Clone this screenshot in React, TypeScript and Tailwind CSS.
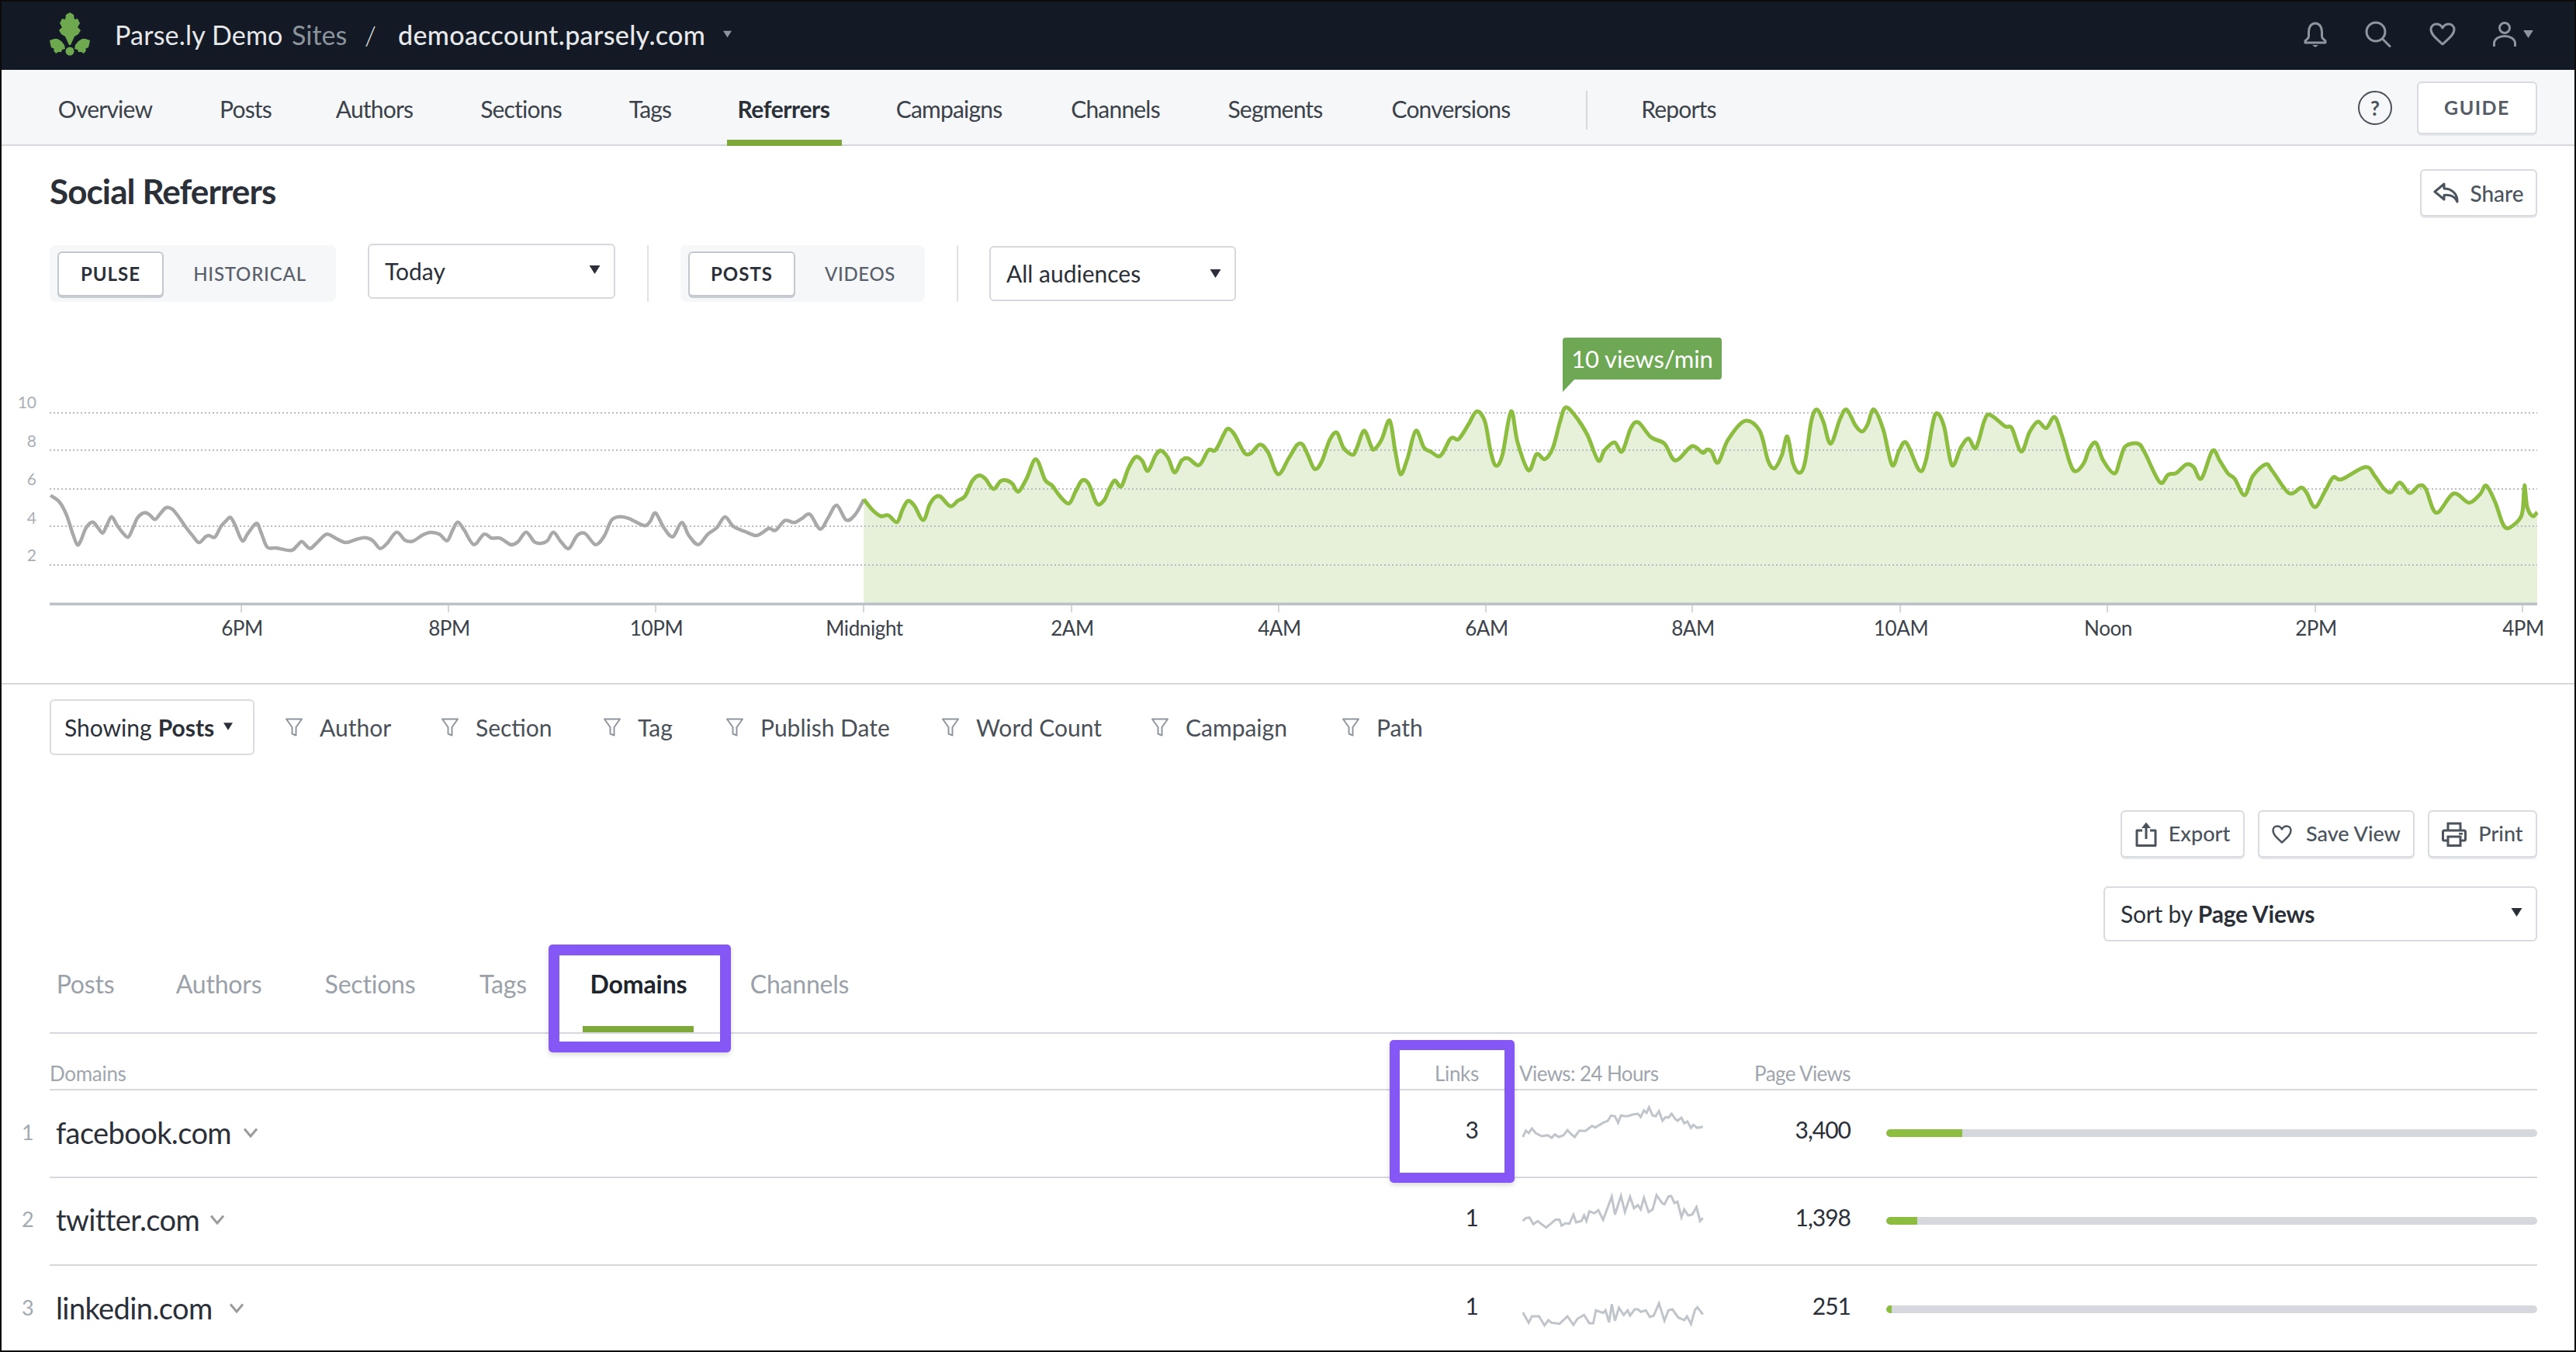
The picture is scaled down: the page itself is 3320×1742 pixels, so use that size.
import React from "react";

type P = [number, number];

const smooth = (p: P[]): string => {
  let d = `M${p[0][0].toFixed(1)} ${p[0][1].toFixed(1)}`;
  for (let i = 0; i < p.length - 1; i++) {
    const a = p[Math.max(i - 1, 0)];
    const b = p[i];
    const c = p[i + 1];
    const e = p[Math.min(i + 2, p.length - 1)];
    const c1x = b[0] + (c[0] - a[0]) / 6;
    const c1y = b[1] + (c[1] - a[1]) / 6;
    const c2x = c[0] - (e[0] - b[0]) / 6;
    const c2y = c[1] - (e[1] - b[1]) / 6;
    d += `C${c1x.toFixed(1)} ${c1y.toFixed(1)} ${c2x.toFixed(1)} ${c2y.toFixed(1)} ${c[0].toFixed(1)} ${c[1].toFixed(1)}`;
  }
  return d;
};

const Z3: P[] = [[85,475],[100,500],[112,550],[122,620],[130,665],[136,650],[145,600],[156,578],[165,600],[173,620],[180,590],[188,557],[197,590],[207,620],[216,636],[224,600],[232,560],[243,542],[252,550],[261,568],[270,545],[280,522],[290,528],[300,555],[312,595],[324,630],[335,657],[346,635],[352,630],[362,636],[372,595],[380,575],[388,560],[396,590],[408,650],[418,620],[432,583],[440,620],[450,675],[465,678],[490,688],[500,670],[508,653],[516,670],[523,680],[535,655],[550,625],[565,640],[582,657],[600,645],[615,638],[628,650],[640,680],[652,660],[668,617],[682,648],[695,652],[712,628],[725,618],[740,625],[753,650],[762,610],[771,578],[782,610],[798,665],[815,625],[828,640],[842,640],[860,665],[872,655],[886,617],[900,655],[912,660],[922,650],[932,617],[945,655],[958,680],[972,630],[985,622],[1003,665],[1018,630],[1030,570],[1045,557],[1060,565],[1085,592],[1095,575],[1104,543],[1118,600],[1133,635],[1148,580],[1160,630],[1176,665],[1192,625],[1207,600],[1221,558],[1235,595],[1255,615],[1272,630],[1282,622],[1295,602],[1306,610],[1322,572],[1337,580],[1350,565],[1364,548],[1381,605],[1395,560],[1409,513],[1425,570],[1440,550],[1455,490]];
const Z4: P[] = [[19,670],[35,712],[50,735],[64,732],[80,758],[90,710],[100,676],[112,695],[128,750],[140,690],[150,662],[160,660],[178,697],[192,675],[205,658],[218,600],[230,578],[242,590],[257,630],[270,600],[282,597],[292,610],[303,640],[318,590],[335,515],[352,595],[365,617],[380,660],[396,686],[408,640],[420,597],[432,610],[447,686],[460,675],[470,630],[480,597],[492,620],[505,550],[518,507],[530,520],[541,560],[555,500],[565,482],[578,510],[590,566],[603,520],[615,512],[635,538],[652,480],[665,480],[680,420],[688,397],[700,420],[718,490],[730,492],[747,458],[762,490],[780,573],[800,510],[815,460],[825,458],[835,500],[847,553],[860,525],[875,440],[888,412],[900,470],[917,498],[925,470],[938,405],[950,460],[956,478],[970,440],[985,365],[995,480],[1005,573],[1018,510],[1033,405],[1048,470],[1060,485],[1078,502],[1095,440],[1102,432],[1112,437],[1130,380],[1145,330],[1160,370],[1170,480],[1180,540],[1192,500],[1208,330],[1220,450],[1240,558],[1255,495],[1270,515],[1285,470],[1298,370],[1308,315],[1325,345],[1348,420],[1368,520],[1380,480],[1398,450],[1412,485],[1428,395],[1442,373],[1465,430],[1490,455],[1510,520],[1540,465],[1560,490]];
const Z5: P[] = [[0,298],[8,305],[20,348],[38,260],[68,187],[95,225],[110,340],[122,370],[135,320],[145,247],[155,350],[167,388],[177,345],[188,190],[198,143],[210,190],[223,275],[240,180],[252,143],[268,205],[280,228],[290,200],[301,143],[318,220],[334,358],[347,300],[360,272],[383,378],[395,340],[408,190],[416,158],[428,210],[442,358],[458,290],[472,255],[485,292],[500,190],[510,163],[538,208],[550,215],[567,305],[582,230],[597,190],[612,215],[627,172],[640,240],[655,350],[665,382],[680,350],[690,295],[702,272],[715,340],[735,390],[745,340],[755,285],[778,275],[790,310],[817,424],[832,395],[847,388],[865,355],[878,365],[892,410],[912,302],[925,340],[940,390],[952,410],[970,474],[985,400],[1008,355],[1020,380],[1050,466],[1072,445],[1082,465],[1097,520],[1115,460],[1130,405],[1145,413],[1188,365],[1205,400],[1222,450],[1235,462],[1250,425],[1268,466],[1285,437],[1297,450],[1316,542],[1347,468],[1375,503],[1395,470],[1406,437],[1422,500],[1435,580],[1445,602],[1465,570],[1472,530],[1475,436],[1480,520],[1490,555],[1498,540]];

const gray: P[] = Z3.map(([x, y]) => [x / 1.30667, 480 + y / 3]);
const green: P[] = [
  ...Z4.map(([x, y]): P => [1100 + x / 1.42545, 420 + y / 3]),
  ...Z5.map(([x, y]): P => [2200 + x / 1.4, 480 + y / 3]),
];
const greenD = smooth(green);

const S1: P[] = [[397,405],[405,380],[412,390],[420,372],[430,390],[445,402],[460,398],[470,408],[478,395],[488,405],[500,398],[510,378],[520,395],[528,405],[540,380],[555,382],[572,362],[580,368],[600,350],[612,342],[620,322],[630,325],[638,350],[645,322],[655,325],[665,323],[675,318],[688,315],[695,328],[703,302],[710,312],[716,290],[725,322],[733,325],[741,305],[750,342],[758,328],[765,330],[773,315],[782,335],[788,342],[798,330],[805,352],[813,345],[822,370],[828,358],[838,370],[852,365]];
const S2: P[] = [[397,730],[405,718],[414,716],[424,742],[435,730],[447,745],[456,755],[468,740],[480,724],[490,725],[495,748],[505,738],[515,740],[525,705],[532,735],[545,730],[552,708],[558,730],[565,692],[578,700],[588,688],[600,725],[622,635],[630,705],[645,632],[655,695],[668,636],[678,680],[688,668],[695,685],[703,640],[715,695],[725,685],[735,630],[750,662],[755,665],[765,635],[772,633],[780,660],[788,655],[798,715],[805,685],[815,708],[825,705],[836,676],[845,730],[852,718]];
const S3: P[] = [[397,1080],[412,1120],[420,1095],[438,1095],[452,1130],[462,1110],[470,1120],[490,1124],[510,1095],[525,1128],[535,1105],[552,1090],[565,1122],[575,1122],[582,1072],[600,1082],[606,1072],[615,1118],[622,1048],[630,1112],[640,1062],[652,1090],[662,1072],[668,1092],[680,1068],[688,1068],[695,1078],[708,1072],[718,1098],[728,1092],[741,1045],[755,1112],[765,1072],[775,1068],[790,1100],[805,1110],[812,1095],[822,1125],[832,1070],[838,1060],[852,1088]];

const sparkPoints = (s: P[], top: number): string =>
  s.map(([x, y]) => `${(x / 1.96 + 1760 - 1962).toFixed(1)},${(1330 + y / 3 - top).toFixed(1)}`).join(" ");

const Caret = ({ className }: { className: string }) => (
  <svg viewBox="0 0 14 11" className={className}>
    <polygon points="0,0 14,0 7,11" fill="currentColor" />
  </svg>
);

const Funnel = () => (
  <svg viewBox="0 0 22 24" className="w-[22px] h-[24px] shrink-0 text-[#8f969e]" fill="none" stroke="currentColor" strokeWidth="2">
    <path d="M1 1.5H21L13.5 12V22.5L8.5 20.5V12Z" strokeLinejoin="round" />
  </svg>
);

const Chevron = () => (
  <svg viewBox="0 0 20 13" className="w-[20px] h-[13px] shrink-0 text-[#9b9b9b]" fill="none" stroke="currentColor" strokeWidth="3">
    <path d="M2 1.5L10 11L18 1.5" />
  </svg>
);

const Logo = () => (
  <svg viewBox="0 0 80 76" className="w-[80px] h-[76px] shrink-0 text-[#6ea84f]" fill="currentColor">
    <polygon points="40,8 45,11 46,17 50,16 53,22 50,27 54,31 51,36 46,39 41,50 39,50 34,39 29,36 26,31 30,27 27,22 30,16 34,17 35,11" />
    <polygon points="14,44 20,42 24,42 29,45 33,50 34,55 30,56 29,59 25,59 22,61 19,57 20,55 16,53 15,49" />
    <polygon points="66,44 60,42 56,42 51,45 47,50 46,55 50,56 51,59 55,59 58,61 61,57 60,55 64,53 65,49" />
    <circle cx="40" cy="58" r="5.5" />
  </svg>
);

const navItems: [string, string][] = [
  ["Overview", "w-[119px]"],
  ["Posts", "w-[67px] ml-[88px]"],
  ["Authors", "w-[99px] ml-[83px]"],
  ["Sections", "w-[107px] ml-[86px]"],
  ["Tags", "w-[58px] ml-[84px]"],
];
const navItems2: [string, string][] = [
  ["Campaigns", "w-[142px] ml-[67px]"],
  ["Channels", "w-[119px] ml-[84px]"],
  ["Segments", "w-[127px] ml-[83px]"],
  ["Conversions", "w-[156px] ml-[85px]"],
];

const NavLink = ({ label, cls }: { label: string; cls: string }) => (
  <div className={`${cls} h-[98px] pt-[10px] border-b-[8px] border-transparent flex items-center justify-center whitespace-nowrap`}>{label}</div>
);

const filters: [string, string][] = [
  ["Author", "w-[91px]"],
  ["Section", "w-[99px]"],
  ["Tag", "w-[48px]"],
  ["Publish Date", "w-[168px]"],
  ["Word Count", "w-[160px]"],
  ["Campaign", "w-[136px]"],
  ["Path", "w-[59px]"],
];

const tabs: [string, string][] = [
  ["Posts", "w-[74px]"],
  ["Authors", "w-[110px]"],
  ["Sections", "w-[120px]"],
  ["Tags", "w-[63px]"],
];

const ticks: [number, string][] = [
  [311, "6PM"], [578, "8PM"], [845, "10PM"], [1113, "Midnight"], [1381, "2AM"], [1648, "4AM"],
  [1915, "6AM"], [2181, "8AM"], [2449, "10AM"], [2716, "Noon"], [2984, "2PM"], [3251, "4PM"],
];
const yGrid: [number, number, string][] = [
  [532, 517, "10"], [580, 567, "8"], [630, 616, "6"], [678, 666, "4"], [728, 714, "2"],
];

const rows = [
  { n: "1", d: "facebook.com", dw: "w-[225px]", l: "3", s: S1, top: 1405, v: "3,400", bar: "w-[98px]", border: "border-b-2", h: "h-[113px]", pad: "pb-[2px]" },
  { n: "2", d: "twitter.com", dw: "w-[182px]", l: "1", s: S2, top: 1518, v: "1,398", bar: "w-[40px]", border: "border-b-2", h: "h-[113px]", pad: "pb-[4px]" },
  { n: "3", d: "linkedin.com", dw: "w-[207px]", l: "1", s: S3, top: 1631, v: "251", bar: "w-[7px]", border: "", h: "h-[113px]", pad: "pb-[4px]" },
];

const btn = "bg-white border-2 border-[#d8dbdf] rounded-[6px] shadow-[0_2px_0_#e6e8eb]";

export default function App() {
  return (
    <div className="relative w-[3320px] h-[1742px] border-2 border-[#0b0b0b] bg-white overflow-hidden font-['Lato',sans-serif] text-[#2b3038]">
      {/* top bar */}
      <header className="h-[88px] bg-[#131a26] flex items-center pl-[48px] pr-[53px] text-[34px] text-[#e6e8ea]">
        <Logo />
        <span className="ml-[18px] w-[215px] pb-[3px] whitespace-nowrap tracking-[0.2px]">Parse.ly Demo</span>
        <span className="ml-[13px] w-[72px] pb-[3px] text-[#8b939c] whitespace-nowrap">Sites</span>
        <span className="ml-[22px] w-[12px] pb-[3px] font-light text-center">/</span>
        <span className="ml-[31px] w-[397px] pb-[3px] whitespace-nowrap font-medium tracking-[0.35px]">demoaccount.parsely.com</span>
        <Caret className="ml-[22px] mb-[4px] w-[11px] h-[10px] text-[#8e959d]" />
        <div className="ml-auto flex items-center pb-[4px] text-[#8e959d]">
          <svg viewBox="0 0 30 34" className="w-[30px] h-[34px]" fill="none" stroke="currentColor" strokeWidth="3">
            <path d="M15 3C9.5 3 6.5 8 6.5 14V20C6.5 23 3 24 2 26V28H28V26C27 24 23.5 23 23.5 20V14C23.5 8 20.5 3 15 3Z" strokeLinejoin="round" />
            <path d="M11 31H19L15 34Z" fill="currentColor" stroke="none" />
          </svg>
          <svg viewBox="0 0 34 34" className="ml-[49px] w-[34px] h-[34px]" fill="none" stroke="currentColor" strokeWidth="3">
            <circle cx="14" cy="14" r="12" />
            <path d="M22.5 23L33 33.5" />
          </svg>
          <svg viewBox="0 0 34 30" className="ml-[49px] w-[34px] h-[30px]" fill="none" stroke="currentColor" strokeWidth="3">
            <path d="M17 28C8 20 2 15 2 9C2 4.5 5.5 2 9 2C12.500 2 15.500 4 17 7C18.500 4 21.500 2 25 2C28.500 2 32 4.500 32 9C32 15 26 20 17 28Z" strokeLinejoin="round" />
          </svg>
          <svg viewBox="0 0 30 32" className="ml-[48px] w-[30px] h-[32px]" fill="none" stroke="currentColor" strokeWidth="3">
            <circle cx="15" cy="8" r="6.500" />
            <path d="M1.500 32V28C1.500 22 8 18.500 15 18.500C22 18.500 28.500 22 28.500 28V32" />
          </svg>
          <Caret className="ml-[9px] w-[13px] h-[10px]" />
        </div>
      </header>

      {/* sub navigation */}
      <nav className="h-[98px] bg-[#f5f7f9] border-b-2 border-[#d5d9de] flex items-start pl-[74px] pr-[48px] text-[30px] tracking-[-0.8px] text-[#3c424a]">
        {navItems.map(([l, c]) => <NavLink key={l} label={l} cls={c} />)}
        <div className="ml-[70px] w-[148px] h-[98px] pt-[10px] border-b-[8px] border-[#7ea83a] flex items-center justify-center whitespace-nowrap pr-[2px] font-bold text-[#2b3038] tracking-[-0.4px]">Referrers</div>
        {navItems2.map(([l, c]) => <NavLink key={l} label={l} cls={c} />)}
        <div className="ml-[96px] mt-[27px] w-[2px] h-[50px] bg-[#d5d9de]" />
        <NavLink label="Reports" cls="w-[99px] ml-[68px]" />
        <div className="ml-auto h-[98px] flex items-center">
          <div className="w-[44px] h-[44px] rounded-full border-2 border-[#4a5058] flex items-center justify-center text-[26px] font-bold text-[#4a5058] tracking-normal">?</div>
          <div className={`${btn} ml-[32px] w-[155px] h-[68px] flex items-center justify-center text-[25px] font-bold tracking-[1.5px] text-[#565d66]`}>GUIDE</div>
        </div>
      </nav>

      {/* title */}
      <div className="pt-[30px] pl-[62px] pr-[48px] flex items-center justify-between">
        <h1 className="h-[61px] text-[44px] leading-[57px] font-bold text-[#2b3038] tracking-[-0.9px]">Social Referrers</h1>
        <div className={`${btn} w-[151px] h-[61px] flex items-center justify-center gap-[14px] text-[28px] font-medium text-[#4b535d]`}>
          <svg viewBox="0 0 33 27" className="w-[33px] h-[27px]" fill="none" stroke="currentColor" strokeWidth="3" strokeLinejoin="round">
            <path d="M14 2L2 12L14 22V16.500C22 15.500 28 18.500 31 25C31.500 15 24 8 14 8Z" />
          </svg>
          <span>Share</span>
        </div>
      </div>

      {/* controls */}
      <div className="mt-[35px] pl-[62px] flex items-start h-[75px]">
        <div className="mt-[2px] w-[369px] h-[73px] bg-[#f5f7f9] rounded-[8px] p-[7px_0_7px_10px] flex items-center text-[24px] font-bold tracking-[1px] uppercase">
          <div className="w-[137px] h-[58px] bg-white border-2 border-[#c3c8ce] rounded-[6px] shadow-[0_2px_0_#c9cdd3] flex items-center justify-center text-[#2b3038]">Pulse</div>
          <div className="flex-1 text-center text-[#59606a] font-medium tracking-[0.8px]">Historical</div>
        </div>
        <div className="ml-[41px] w-[319px] h-[71px] bg-white border-2 border-[#d5d8dd] rounded-[6px] flex items-center pl-[20px] pr-[17px] justify-between text-[30px]">
          <span>Today</span>
          <Caret className="w-[15px] h-[11px] mb-[4px] text-[#2b3038]" />
        </div>
        <div className="ml-[41px] mt-[2px] w-[2px] h-[73px] bg-[#dfe2e6]" />
        <div className="ml-[41px] mt-[2px] w-[315px] h-[73px] bg-[#f5f7f9] rounded-[8px] p-[7px_0_7px_10px] flex items-center text-[24px] font-bold tracking-[1px] uppercase">
          <div className="w-[138px] h-[58px] bg-white border-2 border-[#c3c8ce] rounded-[6px] shadow-[0_2px_0_#c9cdd3] flex items-center justify-center text-[#2b3038]">Posts</div>
          <div className="flex-1 text-center text-[#59606a] font-medium tracking-[0.6px]">Videos</div>
        </div>
        <div className="ml-[41px] mt-[2px] w-[2px] h-[73px] bg-[#dfe2e6]" />
        <div className="ml-[40px] mt-[3px] w-[318px] h-[71px] bg-white border-2 border-[#d5d8dd] rounded-[6px] flex items-center pl-[20px] pr-[17px] justify-between text-[30px]">
          <span>All audiences</span>
          <Caret className="w-[15px] h-[11px] text-[#2b3038]" />
        </div>
      </div>

      {/* chart */}
      <div className="relative h-[491px]">
        <svg viewBox="2 389 3316 491" className="block w-[3316px] h-[491px]">
          <path d={`${greenD}L3270 777L1113 777Z`} fill="#e7f1da" />
          {yGrid.map(([y, ty, t]) => (
            <g key={t}>
              <line x1="64" x2="3270" y1={y} y2={y} stroke="#b8bdc5" strokeWidth="2" strokeDasharray="2 3" />
              <text x="47" y={ty} textAnchor="end" dominantBaseline="central" fontSize="21" fill="#a9afb7">{t}</text>
            </g>
          ))}
          <path d={smooth(gray)} fill="none" stroke="#a9a9a9" strokeWidth="4.500" strokeLinejoin="round" />
          <path d={greenD} fill="none" stroke="#8cbc40" strokeWidth="5" strokeLinejoin="round" />
          <rect x="64" y="776.500" width="3206" height="3.500" fill="#bcc0c7" />
          {ticks.map(([x, t]) => (
            <g key={t}>
              <line x1={x} x2={x} y1="780" y2="789" stroke="#d3d6db" strokeWidth="2" />
              <text x={x + 1} y="809" textAnchor="middle" dominantBaseline="central" fontSize="26" fill="#3c424a" letterSpacing="-0.4">{t}</text>
            </g>
          ))}
        </svg>
        <div className="absolute left-[2012px] top-[46px] w-[205px] h-[54px] bg-[#6ea855] rounded-[4px] rounded-bl-none flex items-center justify-center text-[31px] text-white tracking-[-0.1px] whitespace-nowrap">
          10 views/min
          <svg viewBox="0 0 16 17" className="absolute left-0 top-[53px] w-[16px] h-[17px]">
            <polygon points="0,0 16,0 0,17" fill="#6ea855" />
          </svg>
        </div>
      </div>

      {/* filter row */}
      <div className="border-t-2 border-[#d5d9de] pt-[19px] pl-[62px] pr-[48px] flex items-center text-[30px] text-[#4a5058] tracking-[0px]">
        <div className="w-[264px] h-[72px] shrink-0 border-2 border-[#d8dbdf] rounded-[6px] flex items-center pl-[17px] text-[#2b3038] whitespace-nowrap">
          <span>Showing</span>
          <span className="ml-[8px] font-bold">Posts</span>
          <Caret className="ml-[12px] mb-[2px] w-[12px] h-[10px]" />
        </div>
        <div className="ml-[40px] flex items-center gap-[66px]">
          {filters.map(([l, c]) => (
            <div key={l} className="flex items-center gap-[22px]">
              <Funnel />
              <span className={`${c} whitespace-nowrap`}>{l}</span>
            </div>
          ))}
        </div>
      </div>

      {/* actions */}
      <div className="mt-[71px] pr-[48px] flex justify-end gap-[17px] text-[27px] font-medium text-[#4b535d]">
        <div className={`${btn} w-[160px] h-[61px] flex items-center justify-center gap-[15px]`}>
          <svg viewBox="0 0 28 32" className="w-[28px] h-[32px]" fill="none" stroke="currentColor" strokeWidth="3">
            <path d="M9 11H2V30.500H26V11H19" strokeLinejoin="round" />
            <path d="M14 22V3" />
            <path d="M8 8L14 0.500L20 8Z" fill="currentColor" stroke="none" />
          </svg>
          <span>Export</span>
        </div>
        <div className={`${btn} w-[202px] h-[61px] flex items-center justify-center gap-[18px]`}>
          <svg viewBox="0 0 26 24" className="w-[26px] h-[24px]" fill="none" stroke="currentColor" strokeWidth="2.500">
            <path d="M13 22.500C6 16 1.500 12 1.500 7C1.500 3.500 4 1.500 7 1.500C9.500 1.500 11.800 3 13 5.500C14.200 3 16.500 1.500 19 1.500C22 1.500 24.500 3.500 24.500 7C24.500 12 20 16 13 22.500Z" strokeLinejoin="round" />
          </svg>
          <span>Save View</span>
        </div>
        <div className={`${btn} w-[141px] h-[61px] flex items-center justify-center gap-[15px]`}>
          <svg viewBox="0 0 32 32" className="w-[32px] h-[32px]" fill="none" stroke="currentColor" strokeWidth="3">
            <path d="M8 11V2H24V11" />
            <path d="M8 24H3C2 24 1.500 23.500 1.500 22.500V13C1.500 12 2 11 3.500 11H28.500C30 11 30.500 12 30.500 13V22.500C30.500 23.500 30 24 29 24H24" />
            <rect x="8" y="19" width="16" height="11.500" />
            <rect x="22" y="14" width="5" height="2.500" fill="currentColor" stroke="none" />
          </svg>
          <span>Print</span>
        </div>
      </div>

      {/* sort */}
      <div className="mt-[37px] pr-[48px] flex justify-end">
        <div className="w-[559px] h-[71px] border-2 border-[#d8dbdf] rounded-[6px] bg-white flex items-center justify-between pl-[20px] pr-[17px] text-[30px] tracking-[-0.2px]">
          <span className="whitespace-nowrap">Sort by <span className="font-bold">Page Views</span></span>
          <Caret className="w-[15px] h-[11px] mb-[4px]" />
        </div>
      </div>

      {/* tabs */}
      <div className="ml-[62px] mr-[48px] h-[119px] border-b-2 border-[#d5d9de] flex pl-[9px] gap-[80px] text-[32px] tracking-[-0.2px] text-[#9aa1a9]">
        {tabs.map(([l, c]) => (
          <div key={l} className={`${c} pt-[37px] flex justify-center whitespace-nowrap leading-[36px]`}>{l}</div>
        ))}
        <div className="relative w-[126px] h-[117px] pt-[37px] flex justify-center whitespace-nowrap leading-[36px] font-bold text-[#20252c] tracking-[-0.1px]">
          Domains
          <div className="absolute left-[-9px] right-[-8px] bottom-0 h-[8px] bg-[#7ea83a]" />
        </div>
        <div className="w-[129px] pt-[37px] flex justify-center whitespace-nowrap leading-[36px]">Channels</div>
      </div>

      {/* table header */}
      <div className="ml-[62px] mr-[48px] h-[73px] border-b-2 border-[#d5d9de] flex items-end pb-[5px] text-[26px] leading-[30px] text-[#a0a6ae] tracking-[-0.3px]">
        <div className="flex-1">Domains</div>
        <div className="w-[100px] text-right">Links</div>
        <div className="ml-[52px] w-[237px] whitespace-nowrap tracking-[-0.6px]">Views: 24 Hours</div>
        <div className="w-[190px] text-right whitespace-nowrap tracking-[-0.6px]">Page Views</div>
        <div className="ml-[46px] w-[839px]" />
      </div>

      {/* rows */}
      {rows.map((r) => (
        <div key={r.n} className={`ml-[62px] mr-[48px] ${r.h} ${r.border} border-[#d5d9de] flex items-center`}>
          <div className={`-ml-[36px] w-[44px] text-[27px] text-[#a3a9b0] ${r.pad}`}>{r.n}</div>
          <div className={`flex-1 flex items-center gap-[16px] text-[38px] tracking-[-0.6px] text-[#2b3038] ${r.pad}`}>
            <span className={`${r.dw} whitespace-nowrap`}>{r.d}</span>
            <Chevron />
          </div>
          <div className="w-[100px] text-right text-[30px] pb-[10px]">{r.l}</div>
          <svg viewBox="0 0 234 111" className="ml-[56px] w-[234px] h-[111px] shrink-0">
            <polyline points={sparkPoints(r.s, r.top)} fill="none" stroke="#c0c5cb" strokeWidth="3" />
          </svg>
          <div className="w-[189px] text-right text-[30px] tracking-[-1px] pb-[10px]">{r.v}</div>
          <div className="ml-[46px] mb-[2px] w-[839px] h-[10px] rounded-full bg-[#d5d8dc] overflow-hidden">
            <div className={`${r.bar} h-full rounded-l-full bg-[#8cbc40]`} />
          </div>
        </div>
      ))}

      {/* annotation frames */}
      <div className="absolute left-[705px] top-[1215px] w-[235px] h-[139px] border-[14px] border-[#8557f5] rounded-[5px] shadow-[0_3px_6px_rgba(0,0,0,0.15)]" />
      <div className="absolute left-[1789px] top-[1338px] w-[161px] h-[184px] border-[13px] border-[#8557f5] rounded-[5px] shadow-[0_3px_6px_rgba(0,0,0,0.15)]" />
    </div>
  );
}
